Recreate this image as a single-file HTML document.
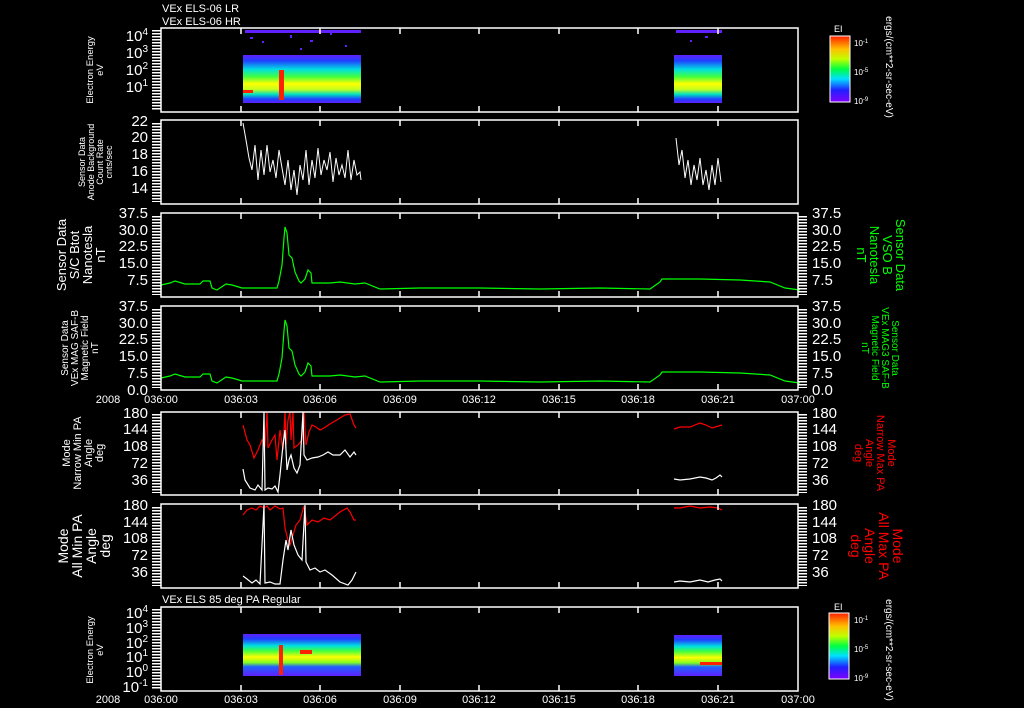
<!DOCTYPE html>
<html><head><meta charset="utf-8"><style>
html,body{margin:0;padding:0;background:#000;width:1024px;height:708px;overflow:hidden}
svg{display:block}
text{font-family:"Liberation Sans",sans-serif;fill:#fff}
</style></head><body>
<svg width="1024" height="708" viewBox="0 0 1024 708" xmlns="http://www.w3.org/2000/svg">
<defs>
<pattern id="mt" width="10" height="3" patternUnits="userSpaceOnUse"><rect x="0" y="0" width="10" height="1.5" fill="#fff"/></pattern>
<linearGradient id="sp" x1="0" y1="0" x2="0" y2="1">
<stop offset="0" stop-color="#6020ff"/><stop offset="0.12" stop-color="#2040ff"/><stop offset="0.3" stop-color="#00e0e0"/><stop offset="0.45" stop-color="#40ff40"/><stop offset="0.6" stop-color="#ffff00"/><stop offset="0.72" stop-color="#c0ff20"/><stop offset="0.82" stop-color="#00e0c0"/><stop offset="0.92" stop-color="#2040ff"/><stop offset="1" stop-color="#6020ff"/></linearGradient>
<linearGradient id="sp2" x1="0" y1="0" x2="0" y2="1">
<stop offset="0" stop-color="#6020ff"/><stop offset="0.12" stop-color="#2040ff"/><stop offset="0.28" stop-color="#00e0e0"/><stop offset="0.4" stop-color="#40ff40"/><stop offset="0.55" stop-color="#ffff00"/><stop offset="0.68" stop-color="#80ff20"/><stop offset="0.78" stop-color="#2060ff"/><stop offset="1" stop-color="#6020ff"/></linearGradient>
<linearGradient id="cb" x1="0" y1="0" x2="0" y2="1">
<stop offset="0" stop-color="#ff2000"/><stop offset="0.2" stop-color="#ffc000"/><stop offset="0.35" stop-color="#c0ff00"/><stop offset="0.5" stop-color="#00ff40"/><stop offset="0.65" stop-color="#00e0ff"/><stop offset="0.82" stop-color="#2020ff"/><stop offset="1" stop-color="#8000ff"/></linearGradient>
</defs>

<text x="162" y="12" font-size="11">VEx ELS-06 LR</text>
<text x="162" y="25" font-size="11">VEx ELS-06 HR</text>

<!-- Panel 1 -->
<rect x="243" y="55" width="118" height="48" fill="url(#sp)"/>
<rect x="279" y="70" width="5" height="30" fill="#ff2000"/>
<rect x="243" y="90" width="10" height="3" fill="#ff2000"/>
<rect x="674" y="55" width="48" height="48" fill="url(#sp)"/>
<g fill="#6020ff">
<rect x="245" y="30" width="116" height="3"/><rect x="250" y="37" width="3" height="2"/><rect x="262" y="41" width="2" height="2"/><rect x="290" y="35" width="2" height="3"/><rect x="310" y="40" width="3" height="2"/><rect x="330" y="33" width="2" height="2"/><rect x="345" y="45" width="2" height="2"/><rect x="300" y="48" width="2" height="2"/><rect x="676" y="30" width="46" height="3"/><rect x="690" y="40" width="2" height="2"/><rect x="705" y="36" width="3" height="2"/></g>
<rect x="161" y="28" width="637" height="84" fill="none" stroke="#fff" stroke-width="1.5"/>
<rect x="152" y="30" width="9" height="80" fill="url(#mt)"/>

<!-- Panel 2 -->
<rect x="161" y="120" width="637" height="84" fill="none" stroke="#fff" stroke-width="1.5"/>
<rect x="152" y="122" width="9" height="80" fill="url(#mt)"/>
<polyline fill="none" stroke="#fff" stroke-width="1" points="243,123 246,140 249,158 252,170 255,145 258,180 261,150 264,175 267,145 270,172 273,160 276,178 279,150 282,168 285,185 288,160 291,190 294,170 297,195 300,165 303,180 306,150 309,185 312,160 315,178 318,148 321,175 324,160 327,170 330,152 333,182 336,158 339,175 342,165 345,178 348,150 351,180 354,160 357,175 360,172 361,180"/>
<polyline fill="none" stroke="#fff" stroke-width="1" points="676,138 679,165 682,150 685,178 688,160 691,185 694,165 697,180 700,158 703,185 706,170 709,190 712,165 715,185 718,158 721,182"/>

<!-- Panel 3 -->
<polyline fill="none" stroke="#0f0" stroke-width="1.2" points="161,285 170,283 175,281 185,284 200,284 203,281 210,281 212,288 217,290 226,284 232,285 242,288 272,288 277,288 279,281 282,265 284,238 285,227 287,233 289,255 292,258 295,272 299,281 301,283 305,279 308,270 311,273 312,283 330,283 340,282 355,284 365,283 380,289 420,288 480,288 540,289 600,288 650,289 660,282 662,279 700,279 740,280 770,282 785,288 800,290"/>
<rect x="161" y="213" width="637" height="84" fill="none" stroke="#fff" stroke-width="1.5"/>
<rect x="152" y="215" width="9" height="80" fill="url(#mt)"/>
<rect x="798" y="215" width="9" height="80" fill="url(#mt)"/>

<!-- Panel 4 -->
<polyline fill="none" stroke="#0f0" stroke-width="1.2" points="161,378 170,376 175,374 185,377 200,377 203,374 210,374 212,381 217,383 226,377 232,378 242,381 272,381 277,381 279,374 282,358 284,331 285,320 287,326 289,348 292,351 295,365 299,374 301,376 305,372 308,363 311,366 312,376 330,376 340,375 355,377 365,376 380,382 420,381 480,381 540,382 600,381 650,382 660,375 662,372 700,372 740,373 770,375 785,381 800,383"/>
<rect x="161" y="306" width="637" height="84" fill="none" stroke="#fff" stroke-width="1.5"/>
<rect x="152" y="308" width="9" height="80" fill="url(#mt)"/>
<rect x="798" y="308" width="9" height="80" fill="url(#mt)"/>

<!-- Panel 5 -->
<polyline fill="none" stroke="#f00" stroke-width="1.2" points="243,425 247,440 250,445 254,458 258,450 262,440 265,445 267,412 268,448 272,440 275,435 277,460 280,430 283,450 285,412 286,445 288,420 290,412 291,440 293,412 294,448 298,445 302,440 304,412 306,445 309,432 312,425 316,427 320,430 324,428 330,424 340,418 345,415 350,414 354,425 356,428"/>
<polyline fill="none" stroke="#fff" stroke-width="1.2" points="243,469 245,480 250,488 255,490 258,485 262,490 264,412 265,490 268,488 272,489 275,486 278,492 280,475 283,445 285,430 287,470 289,460 291,455 294,468 297,473 300,465 303,412 304,455 307,460 312,458 318,457 323,455 328,452 333,455 340,455 345,450 350,457 354,452 356,455"/>
<polyline fill="none" stroke="#f00" stroke-width="1.2" points="674,429 680,427 690,427 700,423 706,425 712,428 722,425"/>
<polyline fill="none" stroke="#fff" stroke-width="1.2" points="674,479 680,480 690,479 700,477 706,478 712,480 716,478 720,475 722,477"/>
<rect x="161" y="412" width="637" height="83" fill="none" stroke="#fff" stroke-width="1.5"/>
<rect x="152" y="414" width="9" height="79" fill="url(#mt)"/>
<rect x="798" y="414" width="9" height="79" fill="url(#mt)"/>

<!-- Panel 6 -->
<polyline fill="none" stroke="#f00" stroke-width="1.2" points="243,515 247,510 252,508 256,510 260,506 264,508 267,506 270,510 275,506 280,509 283,508 285,528 288,540 290,545 293,535 296,525 300,520 304,506 307,525 312,520 318,522 324,518 330,520 340,512 347,508 350,512 354,520 356,520"/>
<polyline fill="none" stroke="#fff" stroke-width="1.2" points="243,576 247,579 252,583 256,580 260,584 264,505 265,583 270,582 275,584 280,584 283,560 286,540 288,550 291,530 294,545 298,555 302,560 305,505 306,562 310,570 315,568 320,572 325,570 332,575 340,582 348,585 352,580 356,572"/>
<polyline fill="none" stroke="#f00" stroke-width="1.2" points="674,508 680,508 690,506 700,508 710,507 718,508 722,510"/>
<polyline fill="none" stroke="#fff" stroke-width="1.2" points="674,582 680,581 690,582 700,580 708,582 715,580 720,579 722,581"/>
<rect x="161" y="504" width="637" height="84" fill="none" stroke="#fff" stroke-width="1.5"/>
<rect x="152" y="506" width="9" height="80" fill="url(#mt)"/>
<rect x="798" y="506" width="9" height="80" fill="url(#mt)"/>

<text x="162" y="603" font-size="11">VEx ELS 85 deg PA Regular</text>

<!-- Panel 7 -->
<rect x="243" y="634" width="118" height="42" fill="url(#sp2)"/>
<rect x="279" y="645" width="4" height="30" fill="#ff2000"/>
<rect x="300" y="650" width="12" height="4" fill="#ff2000"/>
<rect x="674" y="635" width="48" height="41" fill="url(#sp2)"/>
<rect x="700" y="662" width="22" height="3" fill="#ff2000"/>
<rect x="161" y="607" width="637" height="84" fill="none" stroke="#fff" stroke-width="1.5"/>
<rect x="152" y="609" width="9" height="80" fill="url(#mt)"/>

<!-- time ticks -->
<g stroke="#fff" stroke-width="1.5">
<path d="M241 28v6M320 28v6M400 28v6M479 28v6M559 28v6M638 28v6M718 28v6M241 112v-6M320 112v-6M400 112v-6M479 112v-6M559 112v-6M638 112v-6M718 112v-6"/>
<path d="M241 120v6M320 120v6M400 120v6M479 120v6M559 120v6M638 120v6M718 120v6M241 204v-6M320 204v-6M400 204v-6M479 204v-6M559 204v-6M638 204v-6M718 204v-6"/>
<path d="M241 213v6M320 213v6M400 213v6M479 213v6M559 213v6M638 213v6M718 213v6M241 297v-6M320 297v-6M400 297v-6M479 297v-6M559 297v-6M638 297v-6M718 297v-6"/>
<path d="M241 306v6M320 306v6M400 306v6M479 306v6M559 306v6M638 306v6M718 306v6M241 390v-6M320 390v-6M400 390v-6M479 390v-6M559 390v-6M638 390v-6M718 390v-6"/>
<path d="M241 412v6M320 412v6M400 412v6M479 412v6M559 412v6M638 412v6M718 412v6M241 495v-6M320 495v-6M400 495v-6M479 495v-6M559 495v-6M638 495v-6M718 495v-6"/>
<path d="M241 504v6M320 504v6M400 504v6M479 504v6M559 504v6M638 504v6M718 504v6M241 588v-6M320 588v-6M400 588v-6M479 588v-6M559 588v-6M638 588v-6M718 588v-6"/>
<path d="M241 607v6M320 607v6M400 607v6M479 607v6M559 607v6M638 607v6M718 607v6M241 691v-6M320 691v-6M400 691v-6M479 691v-6M559 691v-6M638 691v-6M718 691v-6"/>
</g>

<!-- left tick labels -->
<g font-size="15" text-anchor="end">
<text x="148" y="41">10<tspan font-size="10" dy="-6">4</tspan></text>
<text x="148" y="58">10<tspan font-size="10" dy="-6">3</tspan></text>
<text x="148" y="75">10<tspan font-size="10" dy="-6">2</tspan></text>
<text x="148" y="92">10<tspan font-size="10" dy="-6">1</tspan></text>
<text x="148" y="126">22</text><text x="148" y="142">20</text><text x="148" y="159">18</text><text x="148" y="176">16</text><text x="148" y="193">14</text>
<text x="148" y="218">37.5</text><text x="148" y="235">30.0</text><text x="148" y="251">22.5</text><text x="148" y="268">15.0</text><text x="148" y="285">7.5</text>
<text x="148" y="311">37.5</text><text x="148" y="328">30.0</text><text x="148" y="344">22.5</text><text x="148" y="361">15.0</text><text x="148" y="378">7.5</text><text x="148" y="395">0.0</text>
<text x="148" y="418">180</text><text x="148" y="434">144</text><text x="148" y="451">108</text><text x="148" y="468">72</text><text x="148" y="485">36</text>
<text x="148" y="510">180</text><text x="148" y="527">144</text><text x="148" y="543">108</text><text x="148" y="560">72</text><text x="148" y="577">36</text>
<text x="148" y="618">10<tspan font-size="10" dy="-6">4</tspan></text>
<text x="148" y="633">10<tspan font-size="10" dy="-6">3</tspan></text>
<text x="148" y="648">10<tspan font-size="10" dy="-6">2</tspan></text>
<text x="148" y="662">10<tspan font-size="10" dy="-6">1</tspan></text>
<text x="148" y="677">10<tspan font-size="10" dy="-6">0</tspan></text>
<text x="148" y="692">10<tspan font-size="10" dy="-6">-1</tspan></text>
</g>
<!-- right tick labels -->
<g font-size="15">
<text x="812" y="218">37.5</text><text x="812" y="235">30.0</text><text x="812" y="251">22.5</text><text x="812" y="268">15.0</text><text x="812" y="285">7.5</text>
<text x="812" y="311">37.5</text><text x="812" y="328">30.0</text><text x="812" y="344">22.5</text><text x="812" y="361">15.0</text><text x="812" y="378">7.5</text><text x="812" y="395">0.0</text>
<text x="812" y="418">180</text><text x="812" y="434">144</text><text x="812" y="451">108</text><text x="812" y="468">72</text><text x="812" y="485">36</text>
<text x="812" y="510">180</text><text x="812" y="527">144</text><text x="812" y="543">108</text><text x="812" y="560">72</text><text x="812" y="577">36</text>
</g>
<!-- time labels -->
<g font-size="11" text-anchor="middle">
<text x="108" y="403">2008</text><text x="161" y="403">036:00</text><text x="241" y="403">036:03</text><text x="320" y="403">036:06</text><text x="400" y="403">036:09</text><text x="479" y="403">036:12</text><text x="559" y="403">036:15</text><text x="638" y="403">036:18</text><text x="718" y="403">036:21</text><text x="798" y="403">037:00</text>
<text x="108" y="703">2008</text><text x="161" y="703">036:00</text><text x="241" y="703">036:03</text><text x="320" y="703">036:06</text><text x="400" y="703">036:09</text><text x="479" y="703">036:12</text><text x="559" y="703">036:15</text><text x="638" y="703">036:18</text><text x="718" y="703">036:21</text><text x="798" y="703">037:00</text>
</g>

<!-- left axis titles -->
<g text-anchor="middle">
<text transform="translate(93,70) rotate(-90)" font-size="9.5"><tspan x="0" y="0">Electron Energy</tspan><tspan x="0" y="10">eV</tspan></text>
<text transform="translate(85,162) rotate(-90)" font-size="9"><tspan x="0" y="0">Sensor Data</tspan><tspan x="0" y="9">Anode Background</tspan><tspan x="0" y="18">Count Rate</tspan><tspan x="0" y="27">cnts/sec</tspan></text>
<text transform="translate(66,255) rotate(-90)" font-size="13"><tspan x="0" y="0">Sensor Data</tspan><tspan x="0" y="13">S/C Btot</tspan><tspan x="0" y="26">Nanotesla</tspan><tspan x="0" y="39">nT</tspan></text>
<text transform="translate(68,348) rotate(-90)" font-size="10"><tspan x="0" y="0">Sensor Data</tspan><tspan x="0" y="10">VEx MAG SAF-B</tspan><tspan x="0" y="20">Magnetic Field</tspan><tspan x="0" y="30">nT</tspan></text>
<text transform="translate(70,453) rotate(-90)" font-size="11"><tspan x="0" y="0">Mode</tspan><tspan x="0" y="11">Narrow Min PA</tspan><tspan x="0" y="22">Angle</tspan><tspan x="0" y="33">deg</tspan></text>
<text transform="translate(68,546) rotate(-90)" font-size="14"><tspan x="0" y="0">Mode</tspan><tspan x="0" y="14">All Min PA</tspan><tspan x="0" y="28">Angle</tspan><tspan x="0" y="42">deg</tspan></text>
<text transform="translate(93,650) rotate(-90)" font-size="9.5"><tspan x="0" y="0">Electron Energy</tspan><tspan x="0" y="10">eV</tspan></text>
</g>
<!-- right axis titles -->
<g text-anchor="middle">
<text transform="translate(896,255) rotate(90)" font-size="13" style="fill:#0f0"><tspan x="0" y="0">Sensor Data</tspan><tspan x="0" y="13">VSO B</tspan><tspan x="0" y="26">Nanotesla</tspan><tspan x="0" y="39">nT</tspan></text>
<text transform="translate(892,348) rotate(90)" font-size="10" style="fill:#0f0"><tspan x="0" y="0">Sensor Data</tspan><tspan x="0" y="10">VEx MAG3 SAF-B</tspan><tspan x="0" y="20">Magnetic Field</tspan><tspan x="0" y="30">nT</tspan></text>
<text transform="translate(888,453) rotate(90)" font-size="11" style="fill:#f00"><tspan x="0" y="0">Mode</tspan><tspan x="0" y="11">Narrow Max PA</tspan><tspan x="0" y="22">Angle</tspan><tspan x="0" y="33">deg</tspan></text>
<text transform="translate(893,546) rotate(90)" font-size="14" style="fill:#f00"><tspan x="0" y="0">Mode</tspan><tspan x="0" y="14">All Max PA</tspan><tspan x="0" y="28">Angle</tspan><tspan x="0" y="42">deg</tspan></text>
<text transform="translate(886,67) rotate(90)" font-size="10"><tspan x="0" y="0">ergs/(cm**2-sr-sec-eV)</tspan></text>
<text transform="translate(886,650) rotate(90)" font-size="10"><tspan x="0" y="0">ergs/(cm**2-sr-sec-eV)</tspan></text>
</g>

<!-- colorbars -->
<rect x="830" y="36" width="20" height="66" fill="url(#cb)" stroke="#fff" stroke-width="1"/>
<text x="834" y="32" font-size="9">EI</text>
<text x="854" y="46" font-size="8">10<tspan font-size="6" dy="-3">-1</tspan></text>
<text x="854" y="75" font-size="8">10<tspan font-size="6" dy="-3">-5</tspan></text>
<text x="854" y="104" font-size="8">10<tspan font-size="6" dy="-3">-9</tspan></text>
<rect x="829" y="613" width="20" height="66" fill="url(#cb)" stroke="#fff" stroke-width="1"/>
<text x="834" y="610" font-size="9">EI</text>
<text x="854" y="623" font-size="8">10<tspan font-size="6" dy="-3">-1</tspan></text>
<text x="854" y="652" font-size="8">10<tspan font-size="6" dy="-3">-5</tspan></text>
<text x="854" y="681" font-size="8">10<tspan font-size="6" dy="-3">-9</tspan></text>
</svg>
</body></html>
